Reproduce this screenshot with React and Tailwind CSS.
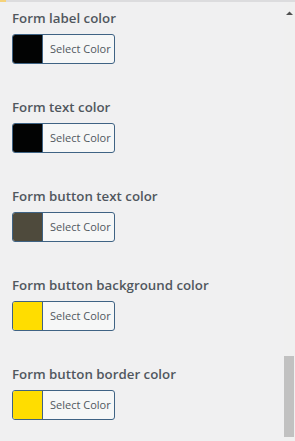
const fields = [
  { label: "Form label color", color: "#020303" },
  { label: "Form text color", color: "#020303" },
  { label: "Form button text color", color: "#4e4a3c" },
  { label: "Form button background color", color: "#ffdd00" },
  { label: "Form button border color", color: "#ffdd00" },
];

const ColorField = ({ label, color }) => (
  <div className="h-[89px] pt-[9px]">
    <div className="text-[13.3px] leading-[18px] font-semibold text-[#50575e]">{label}</div>
    <button className="mt-[7px] flex h-[30px] w-[103px] overflow-hidden rounded-[3px] border border-[#3f6384] bg-[#f6f7f7]">
      <span className="h-full w-[30px] border-r border-[#3f6384]" style={{ backgroundColor: color }} />
      <span className="flex-1 pl-[7px] text-left text-[11px] leading-[28px] text-[#50575e]">Select Color</span>
    </button>
  </div>
);

export default function App() {
  return (
    <div className="relative h-[441px] w-[295px] overflow-hidden bg-[#f0f0f1] font-['Open_Sans',sans-serif]">
      <div className="h-[2px] w-full bg-[#dcdcde]">
        <div className="h-[2px] w-[6px] bg-[#f5d27a]" />
      </div>
      <div className="pl-[12px] -mt-[2px]">
        {fields.map((f) => (
          <ColorField key={f.label} {...f} />
        ))}
      </div>
      <div className="absolute right-0 top-[2px] bottom-0 w-[11px] bg-[#f0f0f0]">
        <svg width="11" height="10" viewBox="0 0 11 10" className="mt-[6px]">
          <path d="M2 7 L5.5 3.5 L9 7 Z" fill="#505050" />
        </svg>
        <div className="absolute left-0 top-[354px] h-[81px] w-[10px] bg-[#c1c1c1]" />
      </div>
    </div>
  );
}
